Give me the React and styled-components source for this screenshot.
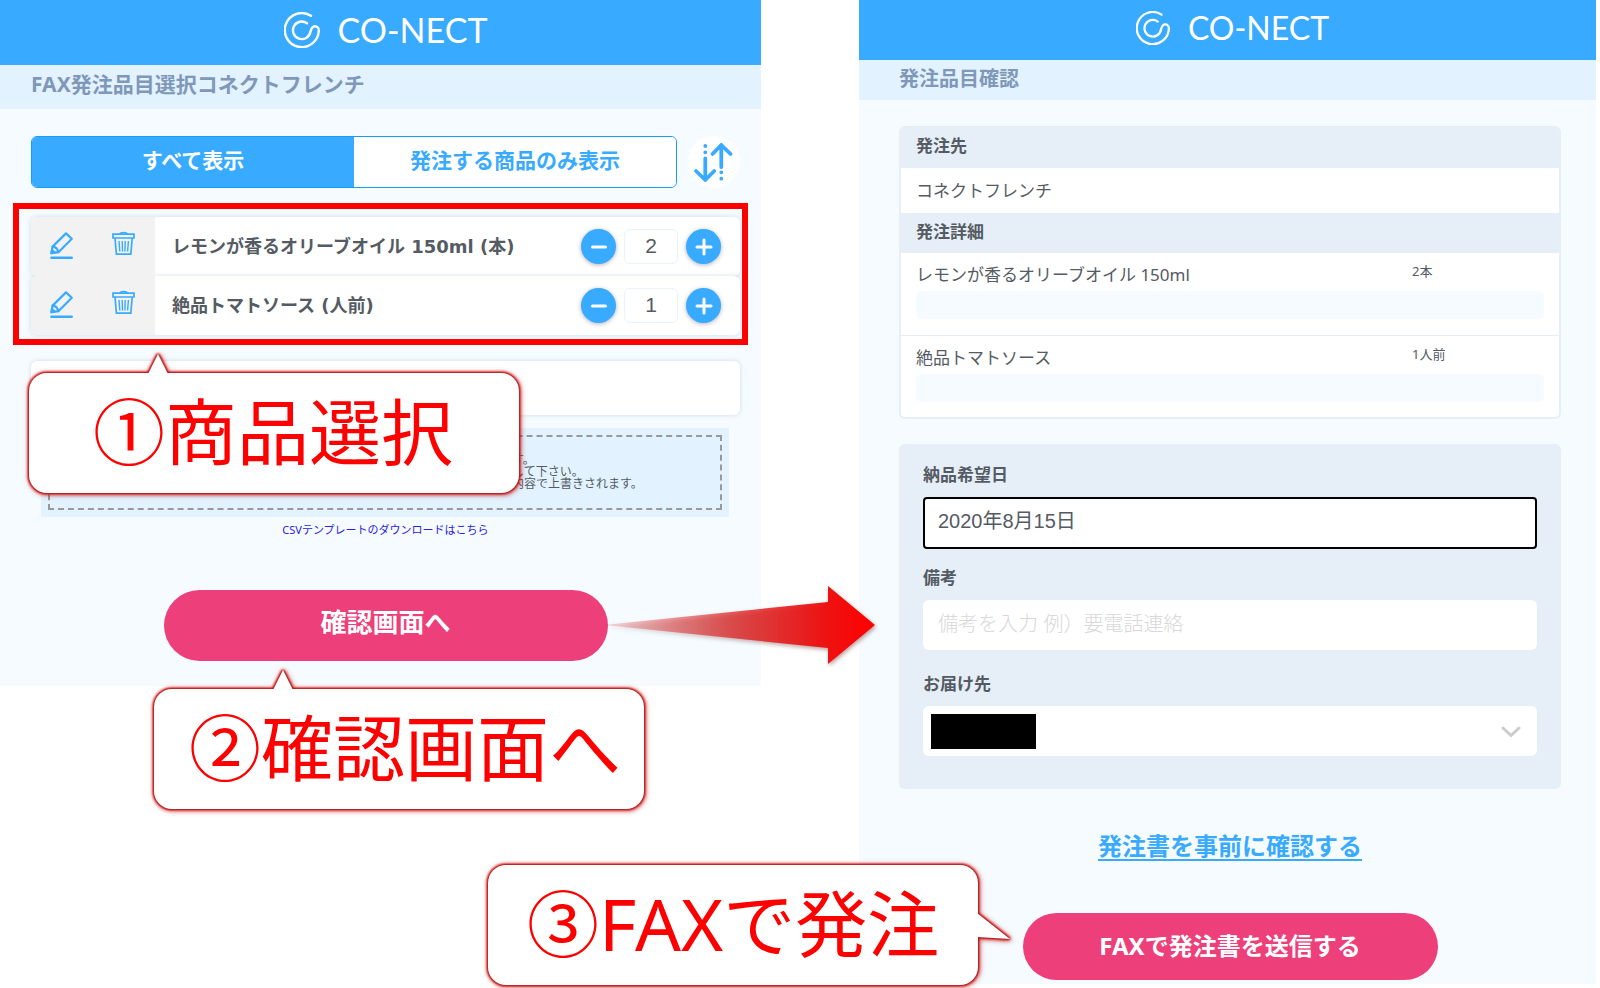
import { useState } from 'react';
import styled, { createGlobalStyle } from 'styled-components';

const ITEMS = [
  { id: 1, name: 'レモンが香るオリーブオイル 150ml', unit: '本', count: 2 },
  { id: 2, name: '絶品トマトソース', unit: '人前', count: 1 },
];

function Logo({ size, fontSize }) {
  return (
    <LogoBox>
      <svg width={size} height={size} viewBox="0 0 36 36" fill="none" aria-hidden="true">
        <path
          d="M27 3.8A17 17 0 1 0 34.8 18.5C34.8 15.8 33 14.2 31 14.2C28.3 14.2 27.3 16.5 26.5 19.5A8.8 8.8 0 1 1 23 11.2"
          stroke="#fff"
          strokeWidth="2.4"
          strokeLinecap="round"
        />
      </svg>
      <LogoText $size={fontSize}>CO-NECT</LogoText>
    </LogoBox>
  );
}

function SortIcon() {
  return (
    <svg width="52" height="52" viewBox="0 0 52 52" fill="none" stroke="#38aaff" strokeWidth="3.8" strokeLinecap="round" strokeLinejoin="round">
      <path d="M33.3 31V9M24.5 18L33.3 9L42.6 18" />
      <path d="M17.3 22.5V44M8 35L17.3 44L26.2 35" />
      <path d="M33.3 36.3v.01M33.3 42.7v.01M17.3 10v.01M17.3 16.3v.01" />
    </svg>
  );
}

function PencilIcon() {
  return (
    <svg width="26" height="30" viewBox="0 0 26 30" fill="none" stroke="#38aaff" strokeWidth="2.2" strokeLinejoin="round" strokeLinecap="round">
      <path d="M2.4 22.2L3.6 15.6L17 2.4L22.8 7.8L9.4 21.2Z" />
      <path d="M3.6 15.6C6.4 15.8 8.6 18 9.4 21.2" />
      <path d="M2.4 22.2L3 19L5.6 21.6Z" fill="#38aaff" />
      <path d="M2.4 26.8H22.8" strokeWidth="2.4" />
    </svg>
  );
}

function TrashIcon() {
  return (
    <svg width="26" height="30" viewBox="0 0 26 30" fill="none" stroke="#38aaff" strokeWidth="1.7">
      <path d="M2 3.2H23V7H2Z" />
      <path d="M9 3C9.6 1 15.6 1 16.2 3" />
      <path d="M4 7L5.4 23.2H19.8L21.2 7" />
      <path d="M8 10L8.8 20.5M11.2 10L11.5 20.5M14.2 10L13.9 20.5M17.4 10L16.6 20.5" strokeWidth="1.4" />
    </svg>
  );
}

function ProductRow({ item }) {
  const [count, setCount] = useState(item.count);
  const label = `${item.name} (${item.unit})`;
  return (
    <Row>
      <RowTools>
        <ToolButton type="button" aria-label="編集">
          <PencilIcon />
        </ToolButton>
        <ToolButton type="button" aria-label="削除">
          <TrashIcon />
        </ToolButton>
      </RowTools>
      <RowName>{label}</RowName>
      <Stepper>
        <RoundButton type="button" aria-label="減らす" onClick={() => setCount(Math.max(0, count - 1))}>
          <svg width="18" height="18" viewBox="0 0 18 18" stroke="#fff" strokeWidth="3" strokeLinecap="round">
            <path d="M2.5 9H15.5" />
          </svg>
        </RoundButton>
        <CountInput aria-label={label} value={count} onChange={(e) => setCount(Number(e.target.value) || 0)} />
        <RoundButton type="button" aria-label="増やす" onClick={() => setCount(count + 1)}>
          <svg width="18" height="18" viewBox="0 0 18 18" stroke="#fff" strokeWidth="3" strokeLinecap="round">
            <path d="M2 9H16M9 2V16" />
          </svg>
        </RoundButton>
      </Stepper>
    </Row>
  );
}

function SelectPanel() {
  return (
    <LeftPanel>
      <Header $height={65}>
        <Logo size={36} fontSize={34} />
      </Header>
      <SubHeader $height={44}>
        <Title $size={21}>FAX発注品目選択コネクトフレンチ</Title>
      </SubHeader>
      <LeftBody>
        <FilterBar>
          <Toggle>
            <ToggleButton type="button" $active>すべて表示</ToggleButton>
            <ToggleButton type="button">発注する商品のみ表示</ToggleButton>
          </Toggle>
          <SortButton type="button" aria-label="並び替え">
            <SortIcon />
          </SortButton>
        </FilterBar>
        <Highlight>
          {ITEMS.map((item) => (
            <ProductRow key={item.id} item={item} />
          ))}
        </Highlight>
        <EmptyCard />
        <CsvDrop>
          <CsvInner>
            <span>す。</span>
            <span>して下さい。</span>
            <span>内容で上書きされます。</span>
          </CsvInner>
        </CsvDrop>
        <CsvLink href="#csv">CSVテンプレートのダウンロードはこちら</CsvLink>
        <ConfirmButton type="button">確認画面へ</ConfirmButton>
      </LeftBody>
      <CalloutSelect>①商品選択</CalloutSelect>
      <CalloutConfirm>②確認画面へ</CalloutConfirm>
      <Arrow viewBox="0 0 280 96" aria-hidden="true">
        <defs>
          <linearGradient id="arrowFill" x1="0" x2="1" y1="0" y2="0">
            <stop offset="0" stopColor="#e02020" stopOpacity="0.15" />
            <stop offset="0.5" stopColor="#e02020" stopOpacity="0.75" />
            <stop offset="0.82" stopColor="#ee1212" />
            <stop offset="1" stopColor="#ff0000" />
          </linearGradient>
        </defs>
        <path d="M2 46L226 23V7L273 46L226 85V69Z" fill="url(#arrowFill)" />
      </Arrow>
    </LeftPanel>
  );
}

function ConfirmPanel() {
  return (
    <RightPanel>
      <Header $height={60}>
        <Logo size={34} fontSize={32} />
      </Header>
      <SubHeader $height={40}>
        <Title $size={20}>発注品目確認</Title>
      </SubHeader>
      <RightBody>
        <Summary>
          <SummaryHead $height={42}>発注先</SummaryHead>
          <Supplier>コネクトフレンチ</Supplier>
          <SummaryHead $height={40}>発注詳細</SummaryHead>
          {ITEMS.map((item) => (
            <Detail key={item.id}>
              <DetailLine>
                <span>{item.name}</span>
                <DetailCount>
                  {item.count}
                  {item.unit}
                </DetailCount>
              </DetailLine>
              <DetailNote />
            </Detail>
          ))}
        </Summary>
        <Form>
          <Label htmlFor="date">納品希望日</Label>
          <DateInput id="date" defaultValue="2020年8月15日" />
          <Label htmlFor="memo">備考</Label>
          <TextInput id="memo" placeholder="備考を入力 例）要電話連絡" />
          <Label htmlFor="address">お届け先</Label>
          <SelectBox>
            <Select id="address" />
            <Mask />
            <Chevron width="20" height="12" viewBox="0 0 20 12" aria-hidden="true">
              <path d="M2 2L10 9.5L18 2" fill="none" stroke="#ccc" strokeWidth="3" strokeLinecap="round" />
            </Chevron>
          </SelectBox>
        </Form>
        <PreviewLink href="#preview">発注書を事前に確認する</PreviewLink>
        <SendButton type="button">FAXで発注書を送信する</SendButton>
      </RightBody>
      <CalloutSend>③FAXで発注</CalloutSend>
    </RightPanel>
  );
}

function App() {
  return (
    <>
      <GlobalStyle />
      <Page>
        <SelectPanel />
        <ConfirmPanel />
      </Page>
    </>
  );
}

export default App;

const GlobalStyle = createGlobalStyle`
  * {
    box-sizing: border-box;
  }
  body {
    margin: 0;
    background-color: #fff;
    color: #555b63;
    font-family: 'Noto Sans', 'Noto Sans CJK JP', sans-serif;
  }
  button,
  input,
  select {
    font-family: inherit;
    color: inherit;
    margin: 0;
  }
  button {
    cursor: pointer;
  }
`;

const Page = styled.main`
  display: grid;
  grid-template-columns: 761fr 98fr 737fr 4fr;
  align-items: start;
  min-height: 100vh;
`;

const Panel = styled.section`
  position: relative;
  background-color: #f5fbff;
`;

const LeftPanel = styled(Panel)`
  grid-column: 1;
`;

const RightPanel = styled(Panel)`
  grid-column: 3;
`;

const Header = styled.header`
  height: ${({ $height }) => $height}px;
  padding: 0 21px 5px 31px;
  display: flex;
  align-items: center;
  justify-content: center;
  background-color: #38aaff;
`;

const LogoBox = styled.div`
  display: flex;
  align-items: center;
  gap: 18px;
`;

const LogoText = styled.span`
  font-family: Lato, sans-serif;
  font-size: ${({ $size }) => $size}px;
  line-height: 36px;
  color: #fff;
`;

const SubHeader = styled.div`
  height: ${({ $height }) => $height}px;
  padding: 0 31px 6px;
  display: flex;
  align-items: center;
  background-color: #e2f2ff;
  ${RightPanel} & {
    padding: 0 40px 3px;
  }
`;

const Title = styled.h1`
  margin: 0;
  font-size: ${({ $size }) => $size}px;
  font-weight: bold;
  line-height: 24px;
  color: #8098b8;
`;

const LeftBody = styled.div`
  display: flex;
  flex-direction: column;
  padding: 27px 21px 25px 31px;
`;

const FilterBar = styled.div`
  display: flex;
  gap: 11px;
`;

const Toggle = styled.div`
  flex: 1;
  display: flex;
  height: 52px;
  border: 1px solid #149dff;
  border-radius: 6px;
  overflow: hidden;
`;

const ToggleButton = styled.button`
  flex: 1;
  border: 0;
  padding: 0 0 6px;
  font-size: 21px;
  font-weight: bold;
  background-color: ${({ $active }) => ($active ? '#38aaff' : '#fff')};
  color: ${({ $active }) => ($active ? '#fff' : '#38aaff')};
`;

const SortButton = styled.button`
  width: 52px;
  height: 52px;
  padding: 0;
  border: 0;
  border-radius: 50%;
  background-color: #fff;
`;

const Highlight = styled.div`
  margin: 15px -8px 0 -18px;
  padding: 8px 2px 4px 12px;
  border: 6px solid #ff0000;
`;

const Row = styled.div`
  display: flex;
  align-items: center;
  height: 59px;
  padding-right: 19px;
  border-radius: 6px;
  background-color: #fff;
  box-shadow: 0 0 5px rgba(110, 140, 170, 0.28);
`;

const RowTools = styled.div`
  align-self: stretch;
  display: flex;
  align-items: center;
  justify-content: space-between;
  width: 124px;
  padding: 0 18px 2px;
  border-radius: 6px 0 0 6px;
  background-color: #f2f2f2;
`;

const ToolButton = styled.button`
  display: flex;
  padding: 0;
  border: 0;
  background: none;
`;

const RowName = styled.span`
  flex: 1;
  margin-left: 17px;
  padding-bottom: 4px;
  font-family: 'DejaVu Sans', 'Noto Sans CJK JP', sans-serif;
  font-size: 18px;
  font-weight: bold;
`;

const Stepper = styled.div`
  display: flex;
  align-items: center;
  gap: 8px;
`;

const RoundButton = styled.button`
  display: flex;
  align-items: center;
  justify-content: center;
  width: 35px;
  height: 35px;
  padding: 0;
  border: 0;
  border-radius: 50%;
  background-color: #38aaff;
  box-shadow: 0 1px 4px rgba(60, 60, 100, 0.4);
`;

const CountInput = styled.input`
  width: 54px;
  height: 35px;
  padding: 0 0 2px;
  border: 1px solid #e9f3fb;
  border-radius: 6px;
  font-family: 'Liberation Sans', Arial, sans-serif;
  font-size: 21px;
  text-align: center;
`;

const EmptyCard = styled.div`
  height: 54px;
  margin-top: 16px;
  border-radius: 6px;
  background-color: #fff;
  box-shadow: 0 0 4px rgba(110, 140, 170, 0.28);
`;

const CsvDrop = styled.div`
  margin: 13px 11px 0 10px;
  padding: 7px;
  background-color: #e2f2ff;
`;

const CsvInner = styled.div`
  display: flex;
  flex-direction: column;
  padding: 17px 0 18px 462px;
  border: 2px dashed #999;
  font-size: 12px;
  line-height: 12px;
  white-space: nowrap;
`;

const CsvLink = styled.a`
  align-self: center;
  margin-top: 5px;
  font-size: 11px;
  line-height: 16px;
  color: #2a20e8;
  text-decoration: none;
`;

const PillButton = styled.button`
  align-self: center;
  border: 0;
  border-radius: 36px;
  background-color: #ed3f79;
  color: #fff;
  font-weight: bold;
`;

const ConfirmButton = styled(PillButton)`
  width: 444px;
  height: 71px;
  margin-top: 52px;
  padding: 0 0 9px;
  font-size: 26px;
`;

const RightBody = styled.div`
  display: flex;
  flex-direction: column;
  padding: 26px 35px 4px 40px;
`;

const Summary = styled.section`
  border: 2px solid #e6eff7;
  border-top: 0;
  border-radius: 6px;
  background-color: #fff;
  overflow: hidden;
  font-size: 17px;
`;

const SummaryHead = styled.h2`
  display: flex;
  align-items: center;
  height: ${({ $height }) => $height}px;
  margin: 0;
  padding: 0 15px 5px;
  background-color: #e6eff7;
  font-size: 17px;
  font-weight: bold;
`;

const Supplier = styled.div`
  display: flex;
  align-items: center;
  height: 45px;
  padding: 0 15px 3px;
`;

const Detail = styled.div`
  height: 82px;
  padding: 10px 15px 0;
  & + & {
    border-top: 1px solid #e6eff7;
  }
`;

const DetailLine = styled.div`
  display: grid;
  grid-template-columns: 496fr 132fr;
  line-height: 24px;
`;

const DetailCount = styled.span`
  font-size: 13px;
  line-height: 16px;
`;

const DetailNote = styled.div`
  height: 28px;
  margin-top: 4px;
  border-radius: 6px;
  background-color: #f5fbff;
`;

const Form = styled.form`
  display: flex;
  flex-direction: column;
  margin-top: 25px;
  padding: 19px 24px 33px;
  border-radius: 6px;
  background-color: #e6eff7;
`;

const Label = styled.label`
  margin-bottom: 10px;
  font-size: 17px;
  font-weight: bold;
  line-height: 24px;
`;

const TextInput = styled.input`
  height: 50px;
  margin-bottom: 22px;
  padding: 0 15px 2px;
  border: 0;
  border-radius: 6px;
  background-color: #fff;
  font-family: 'Liberation Sans', 'Noto Sans CJK JP', sans-serif;
  font-size: 20px;
  &::placeholder {
    color: #d8d8d8;
    font-weight: 300;
    opacity: 1;
  }
`;

const DateInput = styled(TextInput)`
  height: 52px;
  margin-bottom: 17px;
  padding: 0 13px 7px;
  border: 2px solid #000;
  border-radius: 4px;
`;

const SelectBox = styled.div`
  position: relative;
  display: flex;
`;

const Select = styled.select`
  appearance: none;
  flex: 1;
  height: 50px;
  padding: 0 15px;
  border: 0;
  border-radius: 6px;
  background-color: #fff;
  font-size: 20px;
`;

const Mask = styled.span`
  position: absolute;
  top: 8px;
  left: 8px;
  width: 105px;
  height: 35px;
  background-color: #000;
  pointer-events: none;
`;

const Chevron = styled.svg`
  position: absolute;
  top: 20px;
  right: 16px;
  pointer-events: none;
`;

const PreviewLink = styled.a`
  align-self: center;
  margin-top: 40px;
  font-size: 24px;
  font-weight: bold;
  line-height: 34px;
  color: #38aaff;
  text-underline-offset: 4px;
`;

const SendButton = styled(PillButton)`
  width: 415px;
  height: 67px;
  margin-top: 50px;
  padding: 0 0 5px;
  font-size: 24px;
`;

/* 説明用の吹き出し */
const Callout = styled.div`
  position: absolute;
  z-index: 2;
  display: flex;
  align-items: center;
  height: 120px;
  padding-bottom: 4px;
  border-radius: 18px;
  background-color: #fff;
  color: #ff0000;
  font-size: 72px;
  line-height: 100px;
  white-space: nowrap;
  filter: drop-shadow(0 0 1px #333) drop-shadow(0 0 1px #ff0000) drop-shadow(0 0 1px #ff0000)
    drop-shadow(1px 1px 2px rgba(160, 0, 0, 0.5));
  &::before {
    content: '';
    position: absolute;
    background-color: #fff;
  }
`;

const CalloutUp = styled(Callout)`
  width: 490px;
  &::before {
    top: -19px;
    left: 119px;
    width: 20px;
    height: 20px;
    clip-path: polygon(50% 0, 100% 100%, 0 100%);
  }
`;

const CalloutSelect = styled(CalloutUp)`
  top: 373px;
  left: 29px;
  padding-left: 64px;
`;

const CalloutConfirm = styled(CalloutUp)`
  top: 689px;
  left: 154px;
  padding-left: 35px;
`;

const CalloutSend = styled(Callout)`
  top: 865px;
  right: 618px;
  width: 490px;
  padding-left: 39px;
  &::before {
    top: 48px;
    left: 489px;
    width: 33px;
    height: 26px;
    clip-path: polygon(0 0, 100% 100%, 0 92%);
  }
`;

const Arrow = styled.svg`
  position: absolute;
  z-index: 1;
  top: 579px;
  left: 602px;
  width: 280px;
  height: 96px;
  filter: drop-shadow(1px 2px 2px rgba(80, 0, 0, 0.4));
`;
